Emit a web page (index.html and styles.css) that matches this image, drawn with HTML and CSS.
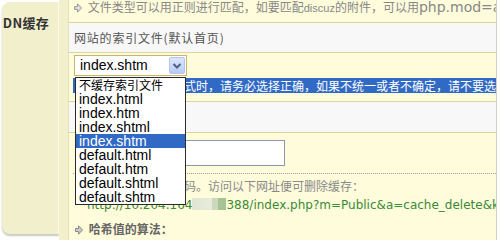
FILE: index.html
```html
<!DOCTYPE html>
<html>
<head lang="zh">
    <meta charset="UTF-8">
    <title>CDN缓存</title>
    <link rel="stylesheet" href="styles.css">
</head>
<body>
<div class="page">
    <div class="side">
        <h3 class="side_title">CDN缓存</h3>
    </div>
    <div class="gap"></div>
    <div class="main">
        <div class="row r1">
            <svg class="arr" width="8" height="10" viewBox="0 0 8 10"><polygon points="0.5,3.5 3.5,3.5 3.5,0.8 7.5,5 3.5,9.2 3.5,6.5 0.5,6.5" fill="#ddd" stroke="#999" stroke-width="1"/></svg>
            文件类型可以用正则进行匹配，如要匹配<span class="lat_s">discuz</span>的附件，可以用<span class="lat_l">php.mod=attachment</span>
        </div>
        <div class="row r2 grey">网站的索引文件(默认首页)</div>
        <div class="row r3">
            <div class="sel_wrap">
                <div class="sel">
                    index.shtm
                    <span class="sel_btn"><svg width="14" height="16" viewBox="0 0 14 16"><polyline points="3.5,6 7,9.5 10.5,6" fill="none" stroke="#4d6185" stroke-width="2"/></svg></span>
                </div>
                <ul class="list">
                    <li class="cn">不缓存索引文件</li>
                    <li>index.html</li>
                    <li>index.htm</li>
                    <li>index.shtml</li>
                    <li class="on">index.shtm</li>
                    <li>default.html</li>
                    <li>default.htm</li>
                    <li>default.shtml</li>
                    <li>default.shtm</li>
                </ul>
            </div>
            <div class="note">网站存在多种首页形式时，请务必选择正确，如果不统一或者不确定，请不要选择</div>
        </div>
        <div class="row r4 grey">缓存删除密码</div>
        <div class="row r5">
            <input class="txt" type="text" value="">
            <div class="dots"></div>
            <div class="tip">请输入删除缓存的密码。访问以下网址便可删除缓存：</div>
            <div class="url">http://10.204.164<span class="blur1"></span><span class="blur2"></span><span class="blur3"></span>388/index.php?m=Public&amp;a=cache_delete&amp;key=</div>
            <div class="sub">
                <svg class="arr" width="8" height="10" viewBox="0 0 8 10"><polygon points="0.5,3.5 3.5,3.5 3.5,0.8 7.5,5 3.5,9.2 3.5,6.5 0.5,6.5" fill="#ccc" stroke="#888" stroke-width="1"/></svg>
                哈希值的算法：
            </div>
        </div>
    </div>
</div>
</body>
</html>
```

FILE: styles.css
```css
*{margin: 0; padding: 0; box-sizing: border-box}
ul{list-style: none}

body{
    background: #ffffff;
    font-family: "Noto Sans CJK SC", sans-serif;
    font-size: 12px;
    color: #555555;
}
.page{
    display: flex;
    width: 500px;
    height: 240px;
    overflow: hidden;
}
.side{
    flex: none;
    width: 57px;
    margin: 2px 0 6px 2px;
    background: #f2efcd;
    border-radius: 8px 0 0 8px;
    border-right: 1px solid #fbfae8;
    box-shadow: 0 2px 2px #c8c8c0;
    overflow: hidden;
}
.side_title{
    font-size: 13px;
    font-weight: bold;
    color: #333333;
    line-height: 16px;
    padding-top: 13px;
    white-space: nowrap;
    text-indent: -8px;
    letter-spacing: 0.3px;
}
.gap{
    flex: none;
    width: 9px;
    background: #f1efcc;
}
.main{
    flex: 1;
    min-width: 0;
    margin-right: 3px;
    border-left: 1px solid #e6e2b8;
    border-right: 1px solid #d0d0c8;
    background: #fefcdb;
}
.row{
    border-bottom: 1px solid #d9d5a0;
    padding-left: 4px;
    white-space: nowrap;
}
.grey{
    background: #f8f8f8;
}
.r1{
    height: 23px;
    line-height: 14px;
    color: #888888;
    padding-left: 5px;
    overflow: hidden;
}
.arr{
    vertical-align: -1px;
    margin-right: 3px;
}
.lat_s{
    font-family: "Liberation Sans", sans-serif;
    font-size: 11px;
}
.lat_l{
    font-family: "DejaVu Sans", sans-serif;
    font-size: 14px;
}
.r2{
    height: 30px;
    line-height: 29px;
    color: #555555;
    padding-left: 5px;
    letter-spacing: 0.8px;
}
.r3{
    height: 49px;
    padding-top: 2px;
    position: relative;
    z-index: 5;
}
.sel_wrap{
    position: relative;
    width: 113px;
    margin-left: 1px;
}
.sel{
    height: 21px;
    border: 1px solid #cdb36e;
    background: #ffffff;
    font-family: "Liberation Sans", sans-serif;
    font-size: 14px;
    line-height: 19px;
    color: #000000;
    padding-left: 5px;
    position: relative;
}
.sel_btn{
    position: absolute;
    right: 1px;
    top: 1px;
    width: 16px;
    height: 17px;
    background: linear-gradient(#dce6fd, #b9cbf6);
    border: 1px solid #b3c6ef;
    border-radius: 2px;
}
.sel_btn svg{
    display: block;
    margin: 0 auto;
}
.list{
    position: absolute;
    left: 1px;
    top: 22px;
    width: 111px;
    border: 1px solid #2a2a2a;
    background: #ffffff;
    z-index: 10;
    padding: 0;
}
.list li{
    height: 14px;
    line-height: 14px;
    font-family: "Liberation Sans", sans-serif;
    font-size: 14px;
    color: #000000;
    padding-left: 3px;
    white-space: nowrap;
    overflow: hidden;
}
.list li.cn{
    font-family: "Noto Sans CJK SC", sans-serif;
    font-size: 12px;
}
.list li.on{
    background: #316ac5;
    color: #ffffff;
}
.note{
    margin-top: 2px;
    height: 15px;
    line-height: 15px;
    background: #316ac5;
    color: #ffffff;
    padding-left: 3px;
    overflow: hidden;
}
.r4{
    height: 31px;
    line-height: 30px;
    padding-left: 10px;
}
.r5{
    border-bottom: none;
    padding-top: 7px;
    height: 108px;
    overflow: hidden;
}
.txt{
    display: block;
    width: 210px;
    height: 26px;
    margin-left: 2px;
    border: 1px solid #8a98a8;
    background: #ffffff;
}
.dots{
    margin-top: 7px;
    border-top: 1px dotted #a0a0a0;
}
.tip{
    margin-top: 4px;
    line-height: 16px;
    color: #8a8a8a;
    padding-left: 3px;
}
.url{
    margin-top: 3px;
    line-height: 16px;
    padding-left: 14px;
    font-family: "DejaVu Sans", sans-serif;
    font-size: 12px;
    color: #3a8a38;
}
.blur1, .blur2, .blur3{
    display: inline-block;
    height: 12px;
    vertical-align: -1px;
}
.blur1{
    width: 20px;
    background: linear-gradient(90deg, #dfe6d2, #e8ecdc);
}
.blur2{
    width: 6px;
    background: #cbd8bb;
}
.blur3{
    width: 8px;
    background: #a5c394;
}
.sub{
    margin-top: 8px;
    line-height: 16px;
    font-weight: bold;
    color: #666666;
    padding-left: 2px;
}
```
